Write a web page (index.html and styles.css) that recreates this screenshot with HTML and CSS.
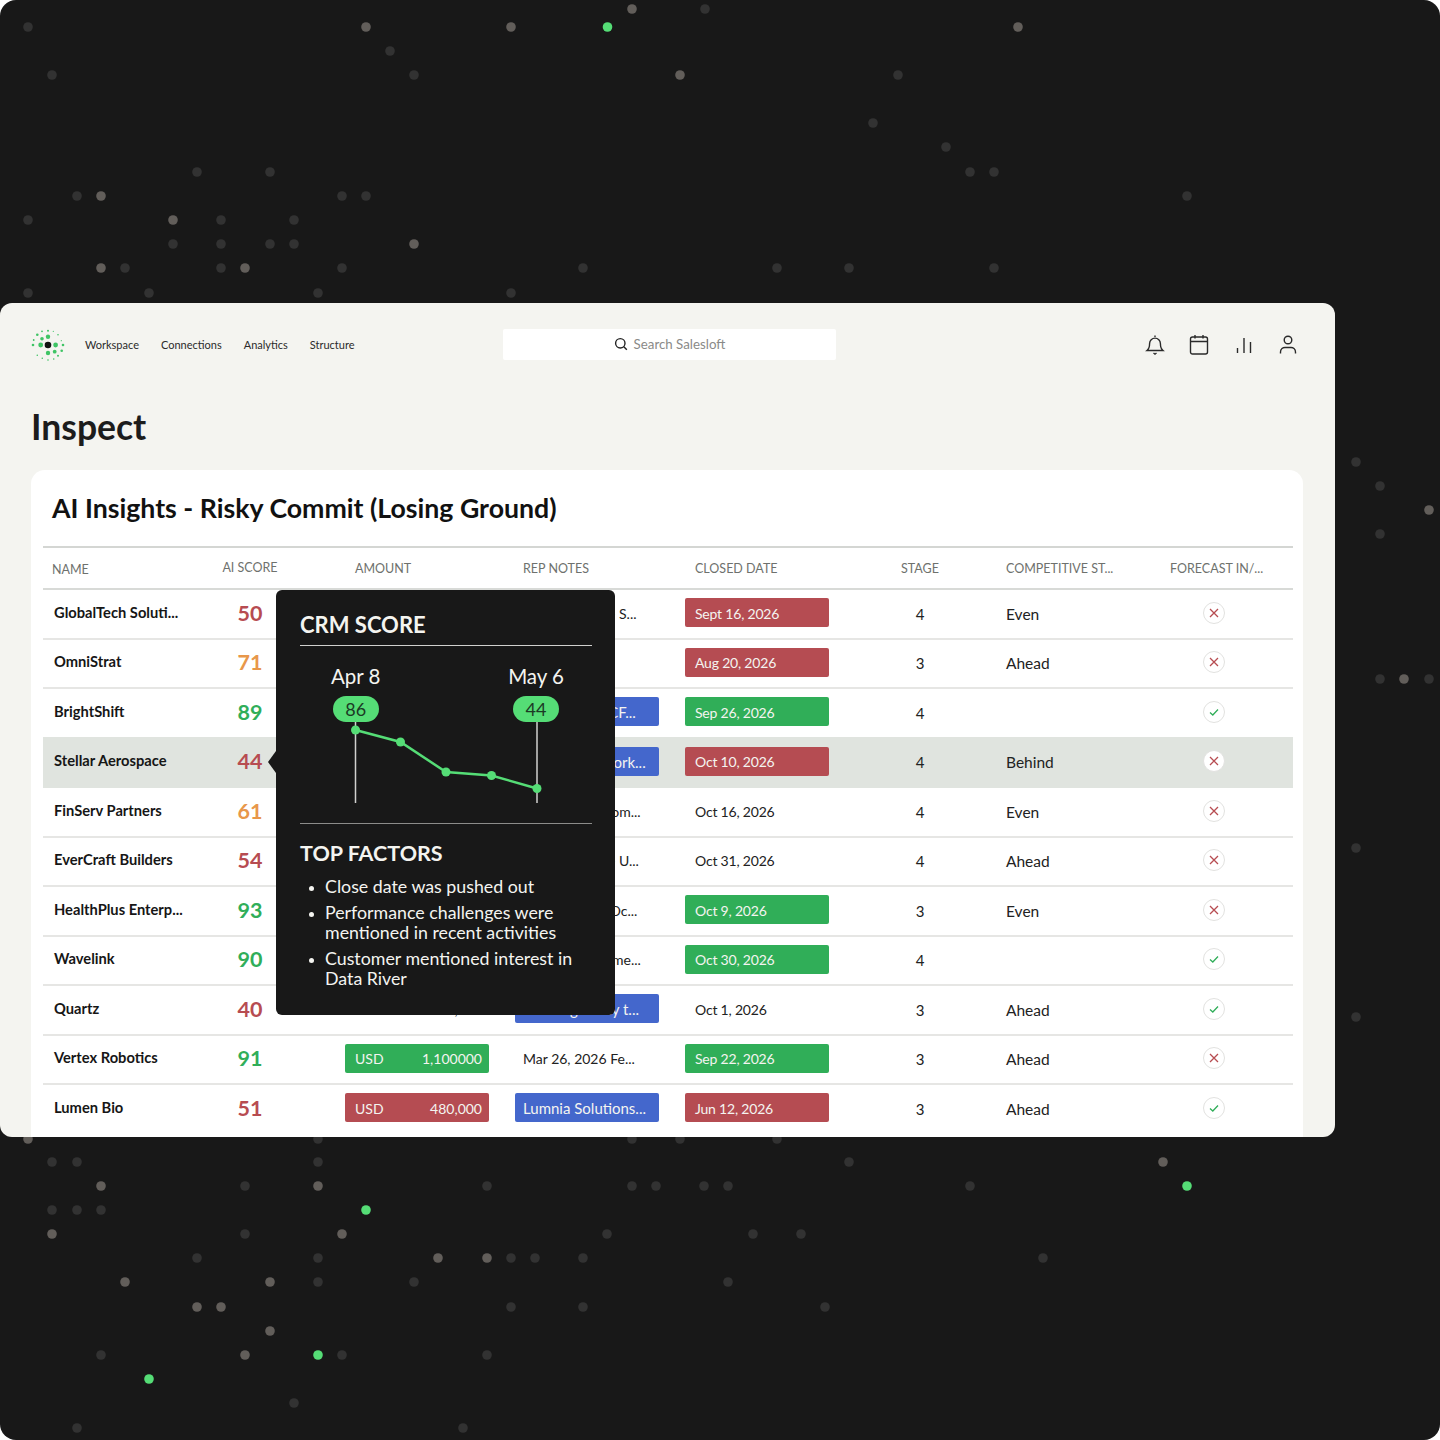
FILE: index.html
```html
<!DOCTYPE html>
<html lang="en">
<head>
<meta charset="utf-8">
<title>Inspect</title>
<link rel="stylesheet" href="styles.css">
</head>
<body>
<main class="canvas">
<svg class="dots" width="1440" height="1440" viewBox="0 0 1440 1440" aria-hidden="true">
<g class="dim">
<circle cx="705" cy="9" r="4.8"/><circle cx="28" cy="27" r="4.8"/><circle cx="390" cy="51" r="4.8"/><circle cx="52" cy="75" r="4.8"/><circle cx="414" cy="75" r="4.8"/><circle cx="898" cy="75" r="4.8"/><circle cx="873" cy="123" r="4.8"/><circle cx="946" cy="147" r="4.8"/><circle cx="197" cy="172" r="4.8"/><circle cx="270" cy="172" r="4.8"/><circle cx="970" cy="172" r="4.8"/><circle cx="994" cy="172" r="4.8"/><circle cx="77" cy="196" r="4.8"/><circle cx="342" cy="196" r="4.8"/><circle cx="366" cy="196" r="4.8"/><circle cx="1187" cy="196" r="4.8"/><circle cx="28" cy="220" r="4.8"/><circle cx="221" cy="220" r="4.8"/><circle cx="294" cy="220" r="4.8"/><circle cx="173" cy="244" r="4.8"/><circle cx="221" cy="244" r="4.8"/><circle cx="270" cy="244" r="4.8"/><circle cx="294" cy="244" r="4.8"/><circle cx="125" cy="268" r="4.8"/><circle cx="221" cy="268" r="4.8"/><circle cx="342" cy="268" r="4.8"/><circle cx="583" cy="268" r="4.8"/><circle cx="777" cy="268" r="4.8"/><circle cx="849" cy="268" r="4.8"/><circle cx="994" cy="268" r="4.8"/><circle cx="28" cy="293" r="4.8"/><circle cx="149" cy="293" r="4.8"/><circle cx="318" cy="293" r="4.8"/><circle cx="511" cy="293" r="4.8"/>
<circle cx="1356" cy="462" r="4.8"/><circle cx="1380" cy="486" r="4.8"/><circle cx="1380" cy="534" r="4.8"/><circle cx="1380" cy="679" r="4.8"/><circle cx="1429" cy="679" r="4.8"/><circle cx="1356" cy="848" r="4.8"/><circle cx="1356" cy="1017" r="4.8"/>
<circle cx="318" cy="1139" r="4.8"/><circle cx="632" cy="1139" r="4.8"/><circle cx="680" cy="1139" r="4.8"/><circle cx="777" cy="1139" r="4.8"/><circle cx="52" cy="1162" r="4.8"/><circle cx="77" cy="1162" r="4.8"/><circle cx="318" cy="1162" r="4.8"/><circle cx="849" cy="1162" r="4.8"/><circle cx="245" cy="1186" r="4.8"/><circle cx="487" cy="1186" r="4.8"/><circle cx="632" cy="1186" r="4.8"/><circle cx="656" cy="1186" r="4.8"/><circle cx="704" cy="1186" r="4.8"/><circle cx="728" cy="1186" r="4.8"/><circle cx="970" cy="1186" r="4.8"/><circle cx="52" cy="1210" r="4.8"/><circle cx="77" cy="1210" r="4.8"/><circle cx="101" cy="1210" r="4.8"/><circle cx="245" cy="1234" r="4.8"/><circle cx="607" cy="1234" r="4.8"/><circle cx="753" cy="1234" r="4.8"/><circle cx="801" cy="1234" r="4.8"/><circle cx="197" cy="1258" r="4.8"/><circle cx="318" cy="1258" r="4.8"/><circle cx="511" cy="1258" r="4.8"/><circle cx="535" cy="1258" r="4.8"/><circle cx="583" cy="1258" r="4.8"/><circle cx="1043" cy="1258" r="4.8"/><circle cx="318" cy="1282" r="4.8"/><circle cx="414" cy="1282" r="4.8"/><circle cx="728" cy="1282" r="4.8"/><circle cx="511" cy="1307" r="4.8"/><circle cx="583" cy="1307" r="4.8"/><circle cx="825" cy="1307" r="4.8"/><circle cx="101" cy="1355" r="4.8"/><circle cx="342" cy="1355" r="4.8"/><circle cx="487" cy="1355" r="4.8"/><circle cx="294" cy="1403" r="4.8"/><circle cx="77" cy="1428" r="4.8"/><circle cx="463" cy="1428" r="4.8"/>
</g>
<g class="bright">
<circle cx="632" cy="9" r="4.8"/><circle cx="366" cy="27" r="4.8"/><circle cx="511" cy="27" r="4.8"/><circle cx="1018" cy="27" r="4.8"/><circle cx="680" cy="75" r="4.8"/><circle cx="101" cy="196" r="4.8"/><circle cx="173" cy="220" r="4.8"/><circle cx="414" cy="244" r="4.8"/><circle cx="101" cy="268" r="4.8"/><circle cx="245" cy="268" r="4.8"/><circle cx="1429" cy="510" r="4.8"/><circle cx="1404" cy="679" r="4.8"/><circle cx="28" cy="1139" r="4.8"/><circle cx="1163" cy="1162" r="4.8"/><circle cx="101" cy="1186" r="4.8"/><circle cx="318" cy="1186" r="4.8"/><circle cx="52" cy="1234" r="4.8"/><circle cx="342" cy="1234" r="4.8"/><circle cx="438" cy="1258" r="4.8"/><circle cx="487" cy="1258" r="4.8"/><circle cx="125" cy="1282" r="4.8"/><circle cx="270" cy="1282" r="4.8"/><circle cx="197" cy="1307" r="4.8"/><circle cx="221" cy="1307" r="4.8"/><circle cx="270" cy="1331" r="4.8"/><circle cx="245" cy="1355" r="4.8"/>
</g>
<g class="green">
<circle cx="607.500" cy="27" r="4.8"/><circle cx="366" cy="1210" r="4.8"/><circle cx="1187" cy="1186" r="4.8"/><circle cx="318" cy="1355" r="4.8"/><circle cx="149" cy="1379" r="4.8"/>
</g>
</svg>

<section class="panel">
<header class="topbar">
<div class="brand">
<svg class="logo" width="34" height="34" viewBox="0 0 34 34" aria-hidden="true">
<g class="logo-dots">
<circle cx="9.700" cy="17" r="2.400"/><circle cx="24.600" cy="17" r="2.400"/><circle cx="17" cy="8.700" r="2.200"/><circle cx="17" cy="25" r="2.200"/><circle cx="11" cy="10.700" r="1.800"/><circle cx="23.700" cy="23.700" r="1.900"/><circle cx="2" cy="17" r="1.300"/><circle cx="32" cy="17" r="1.300"/><circle cx="6.300" cy="6.700" r="1.300"/><circle cx="17" cy="2.700" r="1"/><circle cx="27" cy="6.700" r=".8"/><circle cx="30.700" cy="22.700" r="1.300"/><circle cx="27" cy="27.700" r="1"/><circle cx="17" cy="32" r=".8"/><circle cx="11.300" cy="30.300" r=".8"/><circle cx="6.300" cy="27.300" r=".8"/><circle cx="22.700" cy="31" r=".8"/><circle cx="22.300" cy="3.300" r=".6"/><circle cx="11" cy="3.300" r=".9"/><circle cx="2.700" cy="12" r=".9"/><circle cx="30.300" cy="12.700" r=".6"/>
</g>
<circle class="logo-core" cx="17" cy="17" r="3.300"/>
</svg>
<nav class="nav"><a>Workspace</a><a>Connections</a><a>Analytics</a><a>Structure</a></nav>
</div>
<div class="search">
<svg class="search-icon" width="14" height="14" viewBox="0 0 14 14" aria-hidden="true"><circle cx="6.300" cy="6.300" r="4.700"/><path d="M9.800 9.800l3 3"/></svg>
<span>Search Salesloft</span>
</div>
<div class="tools">
<svg width="20" height="22" viewBox="0 0 20 22" aria-hidden="true"><path d="M10 1.500v1.500M2 16.500c1.700-1.400 2.600-3 2.600-7a5.400 5.400 0 0 1 10.800 0c0 4 .9 5.600 2.600 7zM8.500 19l1.500 1.200 1.500-1.200"/></svg>
<svg width="20" height="22" viewBox="0 0 20 22" aria-hidden="true"><rect x="1.500" y="3" width="17" height="17" rx="2"/><path d="M1.500 7.500h17M6 1v3.500M14 1v3.500"/></svg>
<svg width="20" height="22" viewBox="0 0 20 22" aria-hidden="true"><path d="M3.500 19v-5M10 19V4M16.500 19V8"/></svg>
<svg width="20" height="22" viewBox="0 0 20 22" aria-hidden="true"><circle cx="10" cy="6" r="3.800"/><path d="M2.500 19.500v-1.500c0-3 2.500-4.500 4.500-4.500h6c2 0 4.500 1.500 4.500 4.500v1.500"/></svg>
</div>
</header>

<h1 class="page-title">Inspect</h1>

<article class="card">
<h2 class="card-title">AI Insights - Risky Commit (Losing Ground)</h2>
<div class="table">
<div class="row head">
<span class="h-name">NAME</span><span class="h-score">AI SCORE</span><span class="h-amount">AMOUNT</span><span class="h-notes">REP NOTES</span><span class="h-date">CLOSED DATE</span><span class="h-stage">STAGE</span><span class="h-comp">COMPETITIVE ST...</span><span class="h-fc">FORECAST IN/...</span>
</div>

<div class="row"><span class="name">GlobalTech Soluti...</span><span class="score red">50</span><span class="amount"></span><span class="notes"><span class="plain">Mar 11, 2026 - S...</span></span><span class="date"><span class="tag red-bg">Sept 16, 2026</span></span><span class="stage-no">4</span><span class="comp">Even</span><span class="fc"><span class="mark no"><svg width="10" height="10" viewBox="0 0 10 10"><path d="M1 1l8 8M9 1l-8 8"/></svg></span></span></div>
<div class="row"><span class="name">OmniStrat</span><span class="score orange">71</span><span class="amount"></span><span class="notes"></span><span class="date"><span class="tag red-bg">Aug 20, 2026</span></span><span class="stage-no">3</span><span class="comp">Ahead</span><span class="fc"><span class="mark no"><svg width="10" height="10" viewBox="0 0 10 10"><path d="M1 1l8 8M9 1l-8 8"/></svg></span></span></div>
<div class="row"><span class="name">BrightShift</span><span class="score green-t">89</span><span class="amount"></span><span class="notes"><span class="tag blue-bg">Brightshift 3 CF...</span></span><span class="date"><span class="tag green-bg">Sep 26, 2026</span></span><span class="stage-no">4</span><span class="comp"></span><span class="fc"><span class="mark yes"><svg width="10" height="10" viewBox="0 0 10 10"><path d="M1 5.500l2.800 2.500L9 2.500"/></svg></span></span></div>
<div class="row active"><span class="name">Stellar Aerospace</span><span class="score red">44</span><span class="amount"></span><span class="notes"><span class="tag blue-bg">Stellar's Network...</span></span><span class="date"><span class="tag red-bg">Oct 10, 2026</span></span><span class="stage-no">4</span><span class="comp">Behind</span><span class="fc"><span class="mark no"><svg width="10" height="10" viewBox="0 0 10 10"><path d="M1 1l8 8M9 1l-8 8"/></svg></span></span></div>
<div class="row"><span class="name">FinServ Partners</span><span class="score orange">61</span><span class="amount"></span><span class="notes"><span class="plain">Mar 1, 2026 Com...</span></span><span class="date"><span class="tag none">Oct 16, 2026</span></span><span class="stage-no">4</span><span class="comp">Even</span><span class="fc"><span class="mark no"><svg width="10" height="10" viewBox="0 0 10 10"><path d="M1 1l8 8M9 1l-8 8"/></svg></span></span></div>
<div class="row"><span class="name">EverCraft Builders</span><span class="score red">54</span><span class="amount"></span><span class="notes"><span class="plain">Mar 24, 2026 - U...</span></span><span class="date"><span class="tag none">Oct 31, 2026</span></span><span class="stage-no">4</span><span class="comp">Ahead</span><span class="fc"><span class="mark no"><svg width="10" height="10" viewBox="0 0 10 10"><path d="M1 1l8 8M9 1l-8 8"/></svg></span></span></div>
<div class="row"><span class="name">HealthPlus Enterp...</span><span class="score green-t">93</span><span class="amount"></span><span class="notes"><span class="plain">Mar 24, 2026 Dc...</span></span><span class="date"><span class="tag green-bg">Oct 9, 2026</span></span><span class="stage-no">3</span><span class="comp">Even</span><span class="fc"><span class="mark no"><svg width="10" height="10" viewBox="0 0 10 10"><path d="M1 1l8 8M9 1l-8 8"/></svg></span></span></div>
<div class="row"><span class="name">Wavelink</span><span class="score green-t">90</span><span class="amount"></span><span class="notes"><span class="plain">May 12, 2026 me...</span></span><span class="date"><span class="tag green-bg">Oct 30, 2026</span></span><span class="stage-no">4</span><span class="comp"></span><span class="fc"><span class="mark yes"><svg width="10" height="10" viewBox="0 0 10 10"><path d="M1 5.500l2.800 2.500L9 2.500"/></svg></span></span></div>
<div class="row"><span class="name">Quartz</span><span class="score red">40</span><span class="amount"><span class="tag none money"><span>USD</span><span>720,000</span></span></span><span class="notes"><span class="tag blue-bg">Meeting Delay t...</span></span><span class="date"><span class="tag none">Oct 1, 2026</span></span><span class="stage-no">3</span><span class="comp">Ahead</span><span class="fc"><span class="mark yes"><svg width="10" height="10" viewBox="0 0 10 10"><path d="M1 5.500l2.800 2.500L9 2.500"/></svg></span></span></div>
<div class="row"><span class="name">Vertex Robotics</span><span class="score green-t">91</span><span class="amount"><span class="tag green-bg money"><span>USD</span><span>1,100000</span></span></span><span class="notes"><span class="plain">Mar 26, 2026 Fe...</span></span><span class="date"><span class="tag green-bg">Sep 22, 2026</span></span><span class="stage-no">3</span><span class="comp">Ahead</span><span class="fc"><span class="mark no"><svg width="10" height="10" viewBox="0 0 10 10"><path d="M1 1l8 8M9 1l-8 8"/></svg></span></span></div>
<div class="row"><span class="name">Lumen Bio</span><span class="score red">51</span><span class="amount"><span class="tag red-bg money"><span>USD</span><span>480,000</span></span></span><span class="notes"><span class="tag blue-bg">Lumnia Solutions...</span></span><span class="date"><span class="tag red-bg">Jun 12, 2026</span></span><span class="stage-no">3</span><span class="comp">Ahead</span><span class="fc"><span class="mark yes"><svg width="10" height="10" viewBox="0 0 10 10"><path d="M1 5.500l2.800 2.500L9 2.500"/></svg></span></span></div>

<aside class="tip">
<h3 class="tip-title">CRM SCORE</h3>
<div class="tip-dates">
<div class="tip-date"><span>Apr 8</span><b class="pill">86</b></div>
<div class="tip-date"><span>May 6</span><b class="pill">44</b></div>
</div>
<svg class="chart" width="292" height="81" viewBox="0 0 292 81" aria-hidden="true">
<path class="stem" d="M55.500 0v81M237 0v81"/>
<path class="trend" d="M55.500 8l45 12 45.500 30 45.500 3.500 45.500 13"/>
<g class="nodes"><circle cx="55.500" cy="8" r="4.500"/><circle cx="100.500" cy="20" r="4.500"/><circle cx="146" cy="50" r="4.500"/><circle cx="191.500" cy="53.500" r="4.500"/><circle cx="237" cy="66.500" r="4.500"/></g>
</svg>
<h3 class="tip-title second">TOP FACTORS</h3>
<ul class="factors">
<li>Close date was pushed out</li>
<li>Performance challenges were mentioned in recent activities</li>
<li>Customer mentioned interest in Data River</li>
</ul>
</aside>
</div>
</article>
</section>
</main>
</body>
</html>
```
FILE: styles.css
```css
* { box-sizing: border-box; }
html, body { margin: 0; background: #fff; }
body { font-family: "Lato", "Liberation Sans", sans-serif; color: #181818; }
.canvas { position: relative; width: 1440px; height: 1440px; padding-top: 303px; background: #181818; border-radius: 16px; overflow: hidden; }
.dots { position: absolute; left: 0; top: 0; }
.dim { fill: #323232; }
.bright { fill: #625e5a; }
.green { fill: #55dd76; }

.panel { position: relative; width: 1335px; height: 834px; padding: 26px 32px 0 31px; background: #f4f4f0; border-radius: 12px; overflow: hidden; }
.topbar { display: flex; align-items: center; height: 31px; }
.brand { display: flex; align-items: center; width: 472px; gap: 20px; }
.logo-dots { fill: #3fc465; }
.logo-core { fill: #111; }
.nav { display: flex; gap: 22px; font-size: 11px; color: #2b2b2b; }
.search { display: flex; align-items: center; justify-content: center; gap: 6px; width: 333px; height: 31px; padding-bottom: 1px; background: #fff; border-radius: 2px; font-size: 13.300px; color: #8a8a88; }
.search-icon { fill: none; stroke: #222; stroke-width: 1.4; }
.tools { display: flex; gap: 24.300px; margin-left: auto; margin-right: 5px; }
.tools svg { fill: none; stroke: #2a2a2a; stroke-width: 1.4; }

.page-title { margin: 45px 0 0; font-size: 35.500px; line-height: 44px; font-weight: 700; color: #1c1c1c; }
.card { margin-top: 21px; height: 700px; padding: 0 10px 0 12px; background: #fff; border-radius: 14px 14px 0 0; overflow: hidden; }
.card-title { margin: 0; padding: 20px 0 0 9px; height: 76px; font-size: 26.700px; line-height: 36px; font-weight: 700; color: #111; }

.table { position: relative; }
.row { display: grid; grid-template-columns: 187px 40px 245px 170px 170px 130px 165px 143px; align-items: center; height: 49.500px; padding-bottom: 2px; border-top: 2px solid #e6e6e4; font-size: 15px; color: #222; }
.head { height: 42px; padding-bottom: 0; font-size: 12.500px; color: #6e716d; border-top-color: #d4d6d3; }
.head + .row { border-top-color: #d8dad7; }
.active { background: #e0e4df; border-top-color: #e0e4df; }
.active + .row { border-top-color: #e0e4df; }
.h-name { padding: 2px 0 0 9px; }
.h-score { justify-self: center; padding-bottom: 2px; white-space: nowrap; }
.h-amount { padding-left: 85px; }
.h-notes { padding-left: 8px; }
.h-date { padding-left: 10px; }
.h-stage { justify-self: center; }
.stage-no { justify-self: center; padding-top: 2px; }
.h-comp { padding-left: 21px; }
.comp { padding: 2px 0 0 21px; font-size: 15.500px; }
.h-fc { padding-left: 20px; }
.name { padding: 0 0 2px 11px; font-size: 14.700px; font-weight: 700; color: #161616; white-space: nowrap; }
.score { justify-self: center; font-size: 21.500px; font-weight: 700; }
.red { color: #b74c51; }
.orange { color: #e8974a; }
.green-t { color: #30ae59; }
.amount { padding-left: 75px; }
.notes { overflow: hidden; }
.plain { padding-left: 8px; font-size: 14px; white-space: nowrap; }
.tag { display: flex; align-items: center; width: 144px; height: 29px; padding: 1px 0 0 10px; border-radius: 2px; font-size: 14px; color: #f4f4f0; white-space: nowrap; }
.date .tag { letter-spacing: -.2px; }
.notes .tag { padding-left: 8px; font-size: 15px; }
.none { color: #222; }
.red-bg { background: #b54c52; }
.green-bg { background: #30ae58; }
.blue-bg { background: #4467cc; }
.money { justify-content: space-between; padding-right: 7px; }
.fc { padding-right: 15px; display: flex; justify-content: center; }
.mark { display: flex; align-items: center; justify-content: center; width: 22px; height: 22px; background: #fff; border: 1px solid #e2e2e0; border-radius: 50%; }
.mark svg { fill: none; stroke-width: 1.3; }
.no svg { stroke: #b74c51; }
.yes svg { stroke: #30ae59; }

.tip { position: absolute; left: 233px; top: 44px; width: 339px; height: 425px; padding: 20px 23px 0 24px; background: #181818; border-radius: 6px; color: #f4f4f0; }
.tip::before { content: ""; position: absolute; left: -8px; top: 161px; width: 16px; height: 22px; background: #181818; clip-path: polygon(0 50%, 50% 0, 100% 0, 100% 100%, 50% 100%); }
.tip-title { margin: 0; padding-bottom: 6px; font-size: 22px; line-height: 29px; font-weight: 700; border-bottom: 1px solid #d0d0ce; }
.tip-dates { display: flex; justify-content: space-between; padding: 17px 28px 0 31px; }
.tip-date { display: flex; flex-direction: column; align-items: center; gap: 7px; font-size: 20.500px; line-height: 26px; }
.pill { display: block; width: 46px; height: 26px; background: #55dd76; border-radius: 13px; font-size: 18px; line-height: 26px; font-weight: 400; color: #1c3a25; text-align: center; }
.chart { display: block; fill: none; }
.stem { stroke: #d0d0ce; stroke-width: 1.500; }
.trend { stroke: #55dd76; stroke-width: 2.500; }
.nodes { fill: #55dd76; }
.tip-title.second { margin-top: 20px; padding: 15px 0 0; font-size: 21.500px; border-bottom: 0; border-top: 1px solid #8c8c8a; }
.factors { margin: 8px 0 0; padding: 0 0 0 25px; font-size: 17.800px; line-height: 20px; }
.factors li { margin-bottom: 6px; }
.factors li::marker { font-size: 14px; }
```
